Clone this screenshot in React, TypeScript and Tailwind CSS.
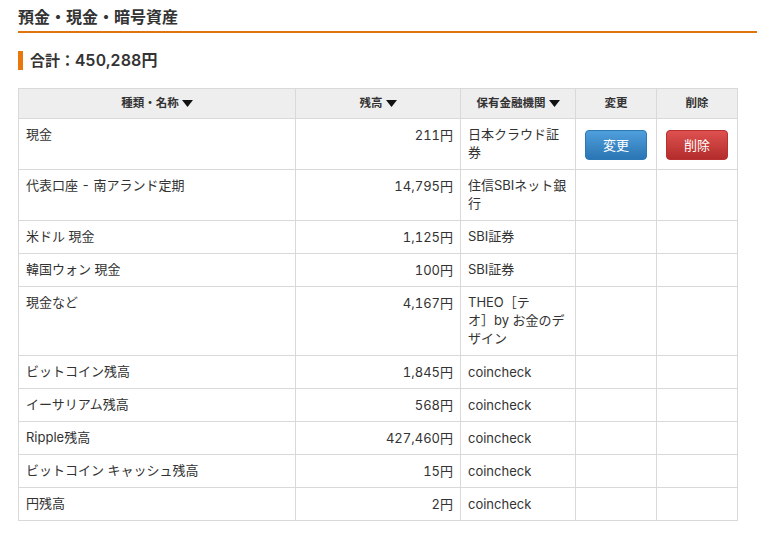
const font = { fontFamily: 'Inter, "Noto Sans CJK JP", sans-serif' }

interface Row {
  name: string
  amount: string
  bank: string
  height: string
  buttons?: boolean
}

const rows: Row[] = [
  { name: "現金", amount: "211円", bank: "日本クラウド証券", height: "h-[51px]", buttons: true },
  { name: "代表口座 - 南アランド定期", amount: "14,795円", bank: "住信SBIネット銀行", height: "h-[51px]" },
  { name: "米ドル 現金", amount: "1,125円", bank: "SBI証券", height: "h-[33px]" },
  { name: "韓国ウォン 現金", amount: "100円", bank: "SBI証券", height: "h-[33px]" },
  { name: "現金など", amount: "4,167円", bank: "THEO［テ\nオ］by お金のデ\nザイン", height: "h-[69px]" },
  { name: "ビットコイン残高", amount: "1,845円", bank: "coincheck", height: "h-[33px]" },
  { name: "イーサリアム残高", amount: "568円", bank: "coincheck", height: "h-[33px]" },
  { name: "Ripple残高", amount: "427,460円", bank: "coincheck", height: "h-[33px]" },
  { name: "ビットコイン キャッシュ残高", amount: "15円", bank: "coincheck", height: "h-[33px]" },
  { name: "円残高", amount: "2円", bank: "coincheck", height: "h-[33px]" },
]

function SortHeader({ label }: { label: string }) {
  return (
    <span className="inline-flex items-center gap-[3px]">
      {label}
      <svg width="11" height="7" viewBox="0 0 11 7" aria-hidden="true">
        <path d="M0 0h11L5.5 7z" fill="#111" />
      </svg>
    </span>
  )
}

const thClass = "border border-[#d9d9d9] bg-[#eeeeee] text-[11.5px] font-bold text-[#333] text-center align-middle p-0"
const tdClass = "border border-[#d9d9d9] text-[13px] leading-[18px] text-[#333] align-top px-[7px] pb-0"

export default function App() {
  return (
    <div style={font} className="w-[757px] h-[546px] overflow-hidden bg-white pl-[18px] tabular-nums">
      <h2 className="h-[33px] pt-[7px] border-b-2 border-[#e2740f] text-[16px] leading-[20px] font-bold text-[#333]">
        預金・現金・暗号資産
      </h2>
      <h3 className="mt-[18px] h-[19px] border-l-[5px] border-[#e8780c] pl-[7px] text-[15px] leading-[19px] font-semibold text-[#333]">
        合計：<span className="text-[16px]">450,288円</span>
      </h3>
      <table className="mt-[18px] w-[720px] table-fixed border-collapse">
        <colgroup>
          <col className="w-[277px]" />
          <col className="w-[165px]" />
          <col className="w-[115px]" />
          <col className="w-[81px]" />
          <col className="w-[81px]" />
        </colgroup>
        <thead>
          <tr className="h-[30px]">
            <th className={thClass}><SortHeader label="種類・名称" /></th>
            <th className={thClass}><SortHeader label="残高" /></th>
            <th className={thClass}><SortHeader label="保有金融機関" /></th>
            <th className={thClass}>変更</th>
            <th className={thClass}>削除</th>
          </tr>
        </thead>
        <tbody>
          {rows.map((row) => (
            <tr key={row.name} className={row.height}>
              <td className={`${tdClass} pt-[6px]`}>{row.name}</td>
              <td className={`${tdClass} pt-[7px] text-right`}>{row.amount}</td>
              <td className={`${tdClass} whitespace-pre-line ${row.bank === "coincheck" ? "pt-[7px]" : "pt-[6px]"}`}>
                {row.bank}
              </td>
              <td className={`${tdClass} pt-[7px] text-center`}>
                {row.buttons && (
                  <button className="mt-[4px] w-[62px] h-[30px] rounded-[4px] border border-[#2c78b4] bg-gradient-to-b from-[#4f9fdc] to-[#2a75b3] text-[13px] text-white">
                    変更
                  </button>
                )}
              </td>
              <td className={`${tdClass} pt-[7px] text-center`}>
                {row.buttons && (
                  <button className="mt-[4px] w-[62px] h-[30px] rounded-[4px] border border-[#b8302f] bg-gradient-to-b from-[#de5150] to-[#b32c2b] text-[13px] text-white">
                    削除
                  </button>
                )}
              </td>
            </tr>
          ))}
        </tbody>
      </table>
    </div>
  )
}
